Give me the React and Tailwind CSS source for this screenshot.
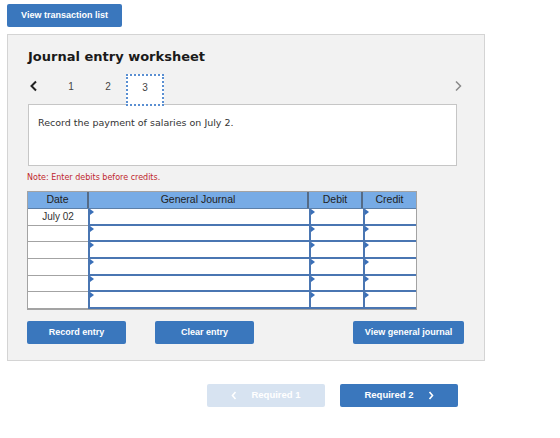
import React from "react";

const rows = ["July 02", "", "", "", "", ""];

function Tri() {
  return (
    <span className="absolute left-0 top-0 w-0 h-0 border-t-[3px] border-b-[3px] border-l-[4px] border-t-transparent border-b-transparent border-l-[#3a6fb8]" />
  );
}

function InputCell({ w }) {
  return (
    <div className={`relative ${w} h-full bg-white border-l-2 border-b-2 border-[#4a76b2]`}>
      <Tri />
    </div>
  );
}

export default function App() {
  return (
    <div className="w-[560px] h-[438px] bg-white font-['Liberation_Sans',Arial,sans-serif] text-[#333]">
      <div className="pt-[4px] pl-[7px]">
        <button className="block w-[115px] h-[23px] rounded-[2px] bg-[#3a77bd] text-white text-[9px] font-bold">
          View transaction list
        </button>
      </div>

      <div className="ml-[7px] mt-[7px] w-[478px] h-[327px] border border-[#d4d4d4] bg-[#f2f2f2] pl-[20px] pt-[13px]">
        <h1 className="font-['DejaVu_Sans',Verdana,sans-serif] font-bold text-[13px] leading-[18px] text-[#1a1a1a]">
          Journal entry worksheet
        </h1>

        <div className="flex items-end h-[41px] mt-[-3px] w-[429px]">
          <span className="w-[24px] h-[32px] flex items-center justify-start pl-[1px] pb-[4px]">
            <svg width="9" height="12" viewBox="0 0 9 12"><path d="M7 1.5 L2.5 6 L7 10.5" fill="none" stroke="#222" strokeWidth="2" /></svg>
          </span>
          <span className="w-[38px] h-[32px] flex items-center justify-center pb-[4px] text-[10px] text-[#444]">1</span>
          <span className="w-[36px] h-[32px] flex items-center justify-center pb-[4px] text-[10px] text-[#444]">2</span>
          <span className="w-[38px] h-[32px] mb-[-2px] flex items-center justify-center pb-[5px] text-[10px] text-[#444] bg-white border-2 border-dotted border-[#5a8fd2] relative z-10">3</span>
          <span className="flex-1" />
          <span className="h-[32px] flex items-center mr-[-5px] pb-[4px]">
            <svg width="8" height="12" viewBox="0 0 8 12"><path d="M2 1.5 L6.5 6 L2 10.5" fill="none" stroke="#8a8a8a" strokeWidth="1.5" /></svg>
          </span>
        </div>

        <div className="w-[429px] h-[62px] bg-white border border-[#c6c6c6] pl-[9px] pt-[11px] font-['DejaVu_Sans',Verdana,sans-serif] text-[9.5px] text-[#333]">
          Record the payment of salaries on July 2.
        </div>

        <p className="mt-[6px] ml-[-1px] font-['DejaVu_Sans',Verdana,sans-serif] text-[8px] leading-[12px] text-[#c0272d]">
          Note: Enter debits before credits.
        </p>

        <div className="mt-[7px] ml-[-1px] w-[390px] border border-[#a3a3a3] bg-white">
          <div className="flex h-[17px] bg-[#77abe5] text-[10.5px] text-[#222] border-b border-[#5c7fa8]">
            <div className="w-[61px] flex items-center justify-center border-r-2 border-[#556b86]">Date</div>
            <div className="w-[220px] flex items-center justify-center border-r-2 border-[#556b86]">General Journal</div>
            <div className="w-[54px] flex items-center justify-center border-r-2 border-[#556b86]">Debit</div>
            <div className="flex-1 flex items-center justify-center">Credit</div>
          </div>
          {rows.map((d, i) => (
            <div key={i} className="flex h-[16.67px]">
              <div className="w-[60px] h-full flex items-center justify-center text-[10px] border-b border-[#a3a3a3]">{d}</div>
              <InputCell w="w-[221px]" />
              <InputCell w="w-[54px]" />
              <InputCell w="flex-1" />
            </div>
          ))}
        </div>

        <div className="flex mt-[11px] ml-[-1px] w-[437px] text-[9px] font-bold text-white">
          <button className="w-[99px] h-[23px] rounded-[2px] bg-[#3a77bd]">Record entry</button>
          <button className="w-[99px] h-[23px] ml-[29px] rounded-[2px] bg-[#3a77bd]">Clear entry</button>
          <span className="flex-1" />
          <button className="w-[111px] h-[23px] rounded-[2px] bg-[#3a77bd]">View general journal</button>
        </div>
      </div>

      <div className="flex mt-[23px] ml-[207px] text-[9.5px] font-bold text-white">
        <button className="w-[118px] h-[23px] rounded-[2px] bg-[#d7e3f1] flex items-center justify-center gap-[14px]">
          <svg width="6" height="9" viewBox="0 0 6 9"><path d="M4.5 1 L1.5 4.5 L4.5 8" fill="none" stroke="#fff" strokeWidth="1.6" /></svg>
          Required 1
        </button>
        <button className="w-[118px] h-[23px] ml-[15px] rounded-[2px] bg-[#3a77bd] flex items-center justify-center gap-[14px]">
          Required 2
          <svg width="6" height="9" viewBox="0 0 6 9"><path d="M1.5 1 L4.5 4.5 L1.5 8" fill="none" stroke="#fff" strokeWidth="1.6" /></svg>
        </button>
      </div>
    </div>
  );
}
